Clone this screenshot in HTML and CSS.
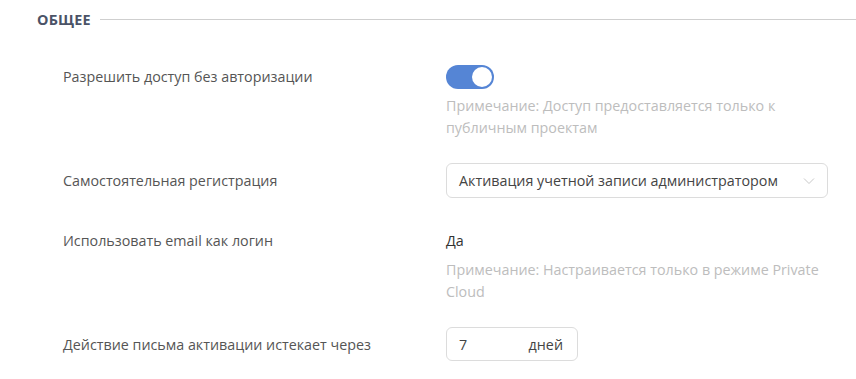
FILE: index.html
```html
<!DOCTYPE html>
<html lang="ru">
<head>
<meta charset="utf-8">
<link rel="stylesheet" href="styles.css">
</head>
<body>
<section class="section">
  <div class="section-head">
    <span class="section-title">ОБЩЕЕ</span>
    <span class="section-line"></span>
  </div>
  <div class="rows">
    <div class="row">
      <div class="label">Разрешить доступ без авторизации</div>
      <div class="control">
        <div class="box"><span class="toggle"><span class="knob"></span></span></div>
        <div class="note">Примечание: Доступ предоставляется только к публичным проектам</div>
      </div>
    </div>
    <div class="row">
      <div class="label">Самостоятельная регистрация</div>
      <div class="control">
        <div class="select">
          <span class="select-text">Активация учетной записи администратором</span>
          <svg class="chev" width="12" height="8" viewBox="0 0 12 8"><path d="M1 1.5 L6 6.5 L11 1.5" fill="none" stroke="#c8c8c8" stroke-width="1"/></svg>
        </div>
      </div>
    </div>
    <div class="row">
      <div class="label">Использовать email как логин</div>
      <div class="control">
        <div class="box value">Да</div>
        <div class="note">Примечание: Настраивается только в режиме Private Cloud</div>
      </div>
    </div>
    <div class="row">
      <div class="label">Действие письма активации истекает через</div>
      <div class="control">
        <div class="num-input"><span class="num">7</span><span class="unit">дней</span></div>
      </div>
    </div>
  </div>
</section>
</body>
</html>
```
FILE: styles.css
```css
* { box-sizing: border-box; }
body {
  margin: 0;
  background: #fff;
  font-family: "Open Sans", "Noto Sans", sans-serif;
  font-size: 14.3px;
  color: #555;
}
.section { padding: 9px 0 0 37px; }
.section-head {
  display: flex;
  align-items: center;
  gap: 9px;
  height: 20px;
}
.section-title {
  font-weight: 700;
  font-size: 14.4px;
  color: #4b5367;
  letter-spacing: 0.2px;
}
.section-line {
  flex: 1;
  height: 1px;
  background: #cfcfcf;
}
.rows {
  padding: 30px 0 0 26px;
  display: flex;
  flex-direction: column;
  gap: 25px;
}
.row {
  display: grid;
  grid-template-columns: 383px 382px;
}
.label {
  height: 35px;
  display: flex;
  align-items: center;
  color: #555;
}
.box {
  height: 35px;
  display: flex;
  align-items: center;
}
.toggle {
  width: 48px;
  height: 24px;
  border-radius: 12px;
  background: #5585d5;
  display: flex;
  align-items: center;
  justify-content: flex-end;
  padding-right: 2px;
}
.knob {
  width: 20px;
  height: 20px;
  border-radius: 50%;
  background: #fff;
}
.note {
  color: #bdbdbd;
  line-height: 21.5px;
  margin-top: 1px;
}
.value { color: #333; }
.select {
  height: 35px;
  border: 1px solid #dcdcdc;
  border-radius: 6px;
  display: flex;
  align-items: center;
  justify-content: space-between;
  padding: 0 12px 0 12px;
}
.select-text { color: #444; }
.chev { margin-top: 1px; }
.num-input {
  width: 132px;
  height: 34px;
  border: 1px solid #dcdcdc;
  border-radius: 6px;
  display: flex;
  align-items: center;
  justify-content: space-between;
  padding: 0 14px 0 12px;
  color: #444;
}
```
